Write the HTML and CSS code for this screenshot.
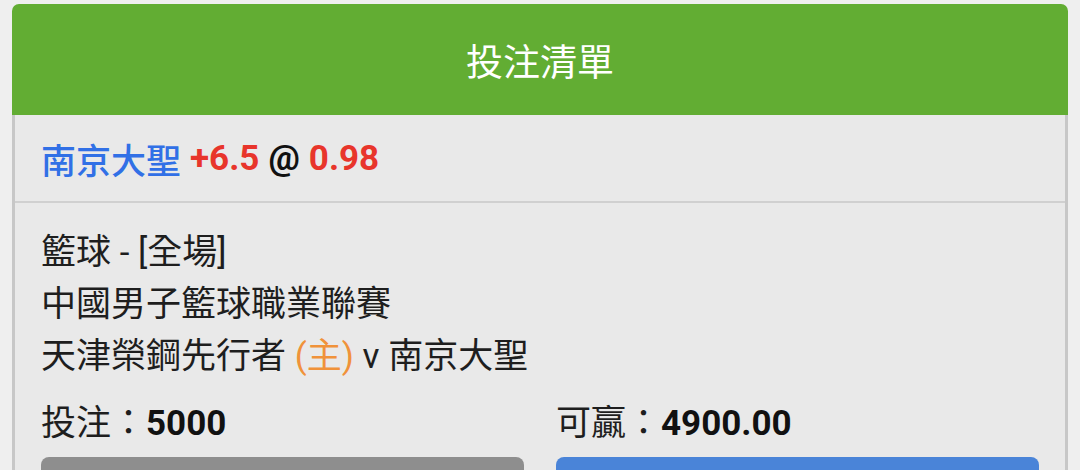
FILE: index.html
```html
<!DOCTYPE html>
<html lang="zh-Hant">
<head>
<meta charset="utf-8">
<title>投注清單</title>
<link rel="stylesheet" href="styles.css">
</head>
<body>
<div class="card">
  <div class="card-header">投注清單</div>
  <div class="card-body">
    <div class="selection">
      <span class="team">南京大聖</span>
      <span class="odds">+6.5</span>
      <span class="at">@</span>
      <span class="odds">0.98</span>
    </div>
    <div class="details">
      <div class="line">籃球 - [全場]</div>
      <div class="line">中國男子籃球職業聯賽</div>
      <div class="line">天津榮鋼先行者 <span class="home">(主)</span> v 南京大聖</div>
      <div class="amounts">
        <div class="amount">投注：<b>5000</b></div>
        <div class="amount">可贏：<b>4900.00</b></div>
      </div>
      <div class="buttons">
        <div class="btn btn-gray"></div>
        <div class="btn btn-blue"></div>
      </div>
    </div>
  </div>
</div>
</body>
</html>
```
FILE: styles.css
```css
html, body {
  margin: 0;
  padding: 0;
  background: #efefef;
}
body {
  font-family: Roboto, "Noto Sans CJK TC", "Noto Sans", sans-serif;
  color: #1e1e1e;
  padding: 4px 12px 0 12px;
  height: 470px;
  overflow: hidden;
  box-sizing: border-box;
}
.card {
  width: 1056px;
}
.card-header {
  background: #62ad33;
  color: #ffffff;
  height: 111px;
  border-radius: 7px 7px 0 0;
  display: flex;
  align-items: center;
  justify-content: center;
  font-family: "Noto Sans CJK TC", sans-serif;
  font-size: 37px;
}
.card-body {
  background: #e9e9e9;
  border-left: 3px solid #c7c7c7;
  border-right: 3px solid #c7c7c7;
  height: 355px;
  overflow: hidden;
}
.selection {
  height: 88px;
  box-sizing: border-box;
  padding: 0 26px;
  display: flex;
  align-items: center;
  gap: 9px;
  font-size: 35px;
  font-weight: 700;
  border-bottom: 2px solid #d0d0d0;
}
.selection span {
  line-height: 1;
}
.team {
  color: #3170e6;
  font-family: "Noto Sans CJK TC", sans-serif;
  font-weight: 500;
}
.odds {
  color: #e8352b;
}
.at {
  color: #111111;
}
.details {
  padding: 24px 26px 0 26px;
  font-size: 35px;
}
.line {
  height: 52px;
  line-height: 52px;
}
.amounts {
  margin-top: 15px;
  display: grid;
  grid-template-columns: 1fr 1fr;
  column-gap: 32px;
  height: 52px;
  line-height: 52px;
}
.home {
  color: #f0923a;
}
.amount b {
  font-weight: 700;
  color: #111111;
}
.buttons {
  margin-top: 7px;
  display: grid;
  grid-template-columns: 1fr 1fr;
  column-gap: 32px;
}
.btn {
  height: 40px;
  border-radius: 8px;
}
.btn-gray {
  background: #8e8e8e;
}
.btn-blue {
  background: #4a84d8;
}
```
